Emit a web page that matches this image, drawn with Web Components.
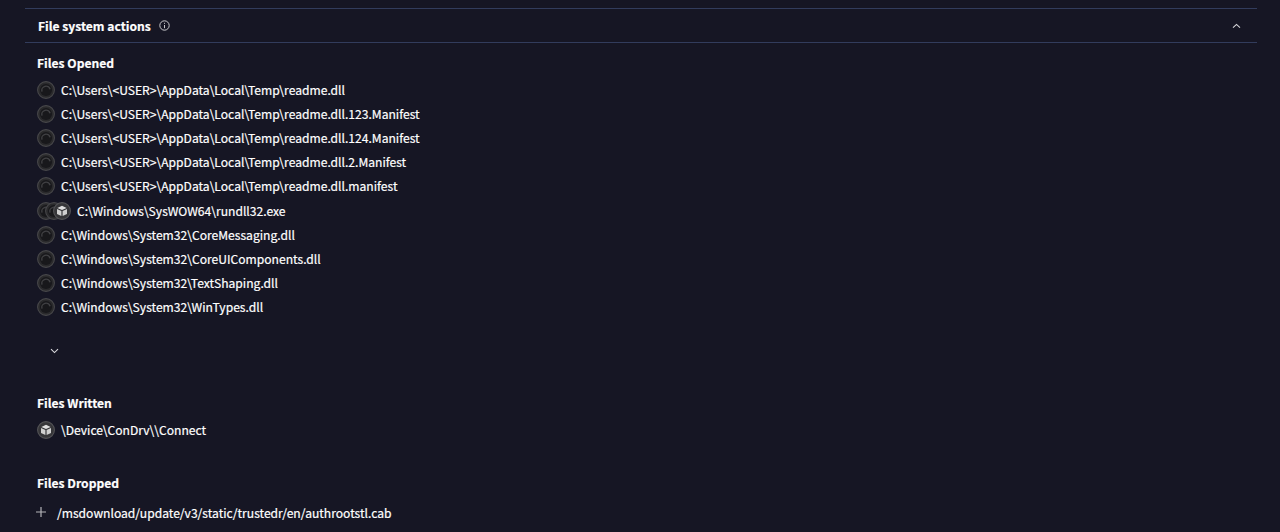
<!DOCTYPE html>
<html>
<head>
<meta charset="utf-8">
<title>File system actions</title>
<style>
html, body { margin: 0; background: #161624; }
body {
  height: 532px;
  overflow: hidden;
  color: #fff;
  font-family: "Noto Sans CJK SC", "Noto Sans", sans-serif;
  font-size: 12.1px;
  -webkit-text-stroke: 0.2px;
}
</style>
</head>
<body>
<template id="section-tpl">
  <style>
    :host { display: block; margin: 8px 23px 0 25px; }
    header {
      height: 33px;
      display: flex;
      align-items: center;
      gap: 8px;
      padding: 0 16px 0 13px;
      border-top: 1px solid #323c5c;
      border-bottom: 1px solid #323c5c;
      font-weight: 700;
      font-size: 12.1px;
    }
    svg { display: block; -webkit-text-stroke: 0; }
    .chev { margin-left: auto; }
    .body { padding: 0 0 0 12px; }
  </style>
  <header>
    <span id="title"></span>
    <svg width="11" height="11" viewBox="0 0 11 11" fill="none" stroke="#c8c8cc">
      <circle cx="5.5" cy="5.5" r="4.7"/>
      <path d="M5.5 5v3.2M5.5 2.8v1"/>
    </svg>
    <svg class="chev" width="9" height="6" viewBox="0 0 9 6" fill="none" stroke="#d8d8dc" stroke-width="1.1">
      <path d="M1 4.6 4.5 1.4 8 4.6"/>
    </svg>
  </header>
  <div class="body"><slot></slot></div>
</template>

<template id="group-tpl">
  <style>
    :host { display: block; }
    h3 {
      margin: 0 0 var(--gap, 5px);
      height: 20px;
      line-height: 20px;
      font-size: 12.1px;
      font-weight: 700;
    }
    .list { display: flex; flex-direction: column; }
  </style>
  <h3 id="label"></h3>
  <div class="list"><slot></slot></div>
</template>

<template id="row-tpl">
  <style>
    :host {
      display: flex;
      align-items: center;
      height: 24.2px;
      white-space: nowrap;
      color: #fff;
    }
    .icons { display: flex; margin: 1px 6px 0 0; }
    .icons svg { display: block; width: 18px; height: 18px; flex: none; }
    .icons svg + svg { margin-left: -10px; }
    .plus { display: none; margin: 0 11px 0 -1px; }
    :host([kind="plus"]) .plus { display: block; }
    :host([kind="plus"]) .icons { display: none; }
  </style>
  <span class="icons" id="icons"></span>
  <svg class="plus" width="10" height="10" viewBox="0 0 10 10" stroke="#b4b4b8" stroke-width="1.2">
    <path d="M5 0v10M0 5h10"/>
  </svg>
  <slot></slot>
</template>

<fs-section title="File system actions">
  <fs-group label="Files Opened" style="padding-top:10px;--gap:4px">
    <fs-row>C:\Users\&lt;USER&gt;\AppData\Local\Temp\readme.dll</fs-row>
    <fs-row>C:\Users\&lt;USER&gt;\AppData\Local\Temp\readme.dll.123.Manifest</fs-row>
    <fs-row>C:\Users\&lt;USER&gt;\AppData\Local\Temp\readme.dll.124.Manifest</fs-row>
    <fs-row>C:\Users\&lt;USER&gt;\AppData\Local\Temp\readme.dll.2.Manifest</fs-row>
    <fs-row>C:\Users\&lt;USER&gt;\AppData\Local\Temp\readme.dll.manifest</fs-row>
    <fs-row kind="stack">C:\Windows\SysWOW64\rundll32.exe</fs-row>
    <fs-row>C:\Windows\System32\CoreMessaging.dll</fs-row>
    <fs-row>C:\Windows\System32\CoreUIComponents.dll</fs-row>
    <fs-row>C:\Windows\System32\TextShaping.dll</fs-row>
    <fs-row>C:\Windows\System32\WinTypes.dll</fs-row>
  </fs-group>
  <fs-more></fs-more>
  <fs-group label="Files Written" style="--gap:5px">
    <fs-row kind="box">\Device\ConDrv\\Connect</fs-row>
  </fs-group>
  <fs-group label="Files Dropped" style="padding-top:31px;--gap:7px">
    <fs-row kind="plus">/msdownload/update/v3/static/trustedr/en/authrootstl.cab</fs-row>
  </fs-group>
</fs-section>

<script>
const ICONS = {
  dark: `<circle cx="9" cy="9" r="8.4" fill="#2a2a2c" stroke="#47474a" stroke-width="1.1"/>
    <circle cx="9" cy="9" r="6" fill="#18181b"/>
    <path d="M5 10.6a4.2 4.2 0 0 1 8.1-2.4" fill="none" stroke="#414144" stroke-width="1.4"/>`,
  box: `<circle cx="9" cy="9" r="8.4" fill="#363639" stroke="#535356" stroke-width="1.1"/>
    <path d="M9 3.8 13.6 5.9 9 8 4.4 5.9Z" fill="#dedede"/>
    <path d="M4 7.1 8.4 9.1v4.9L4 12ZM14 7.1 9.6 9.1v4.9l4.4-2Z" fill="#cfcfcf"/>`,
};

class FsSection extends HTMLElement {
  constructor() {
    super();
    const shadow = this.attachShadow({ mode: "open" });
    shadow.appendChild(document.getElementById("section-tpl").content.cloneNode(true));
    shadow.getElementById("title").textContent = this.getAttribute("title");
  }
}

class FsGroup extends HTMLElement {
  constructor() {
    super();
    const shadow = this.attachShadow({ mode: "open" });
    shadow.appendChild(document.getElementById("group-tpl").content.cloneNode(true));
    shadow.getElementById("label").textContent = this.getAttribute("label");
  }
}

class FsRow extends HTMLElement {
  constructor() {
    super();
    const shadow = this.attachShadow({ mode: "open" });
    shadow.appendChild(document.getElementById("row-tpl").content.cloneNode(true));
    // kind: dark | box | stack | plus
    const kind = this.getAttribute("kind") || "dark";
    const names = { dark: ["dark"], box: ["box"], stack: ["dark", "dark", "box"], plus: [] }[kind];
    shadow.getElementById("icons").innerHTML = names
      .map((n) => `<svg viewBox="0 0 18 18">${ICONS[n]}</svg>`)
      .join("");
  }
}

class FsMore extends HTMLElement {
  constructor() {
    super();
    const shadow = this.attachShadow({ mode: "open" });
    shadow.innerHTML = `
      <style>
        :host { display: block; height: 74px; padding: 29px 0 0 13px; box-sizing: border-box; }
        svg { display: block; }
      </style>
      <svg width="9" height="6" viewBox="0 0 9 6" fill="none" stroke="#d8d8dc" stroke-width="1.1">
        <path d="M1 1.2 4.5 4.6 8 1.2"/>
      </svg>`;
  }
}

customElements.define("fs-section", FsSection);
customElements.define("fs-group", FsGroup);
customElements.define("fs-row", FsRow);
customElements.define("fs-more", FsMore);
</script>
</body>
</html>
